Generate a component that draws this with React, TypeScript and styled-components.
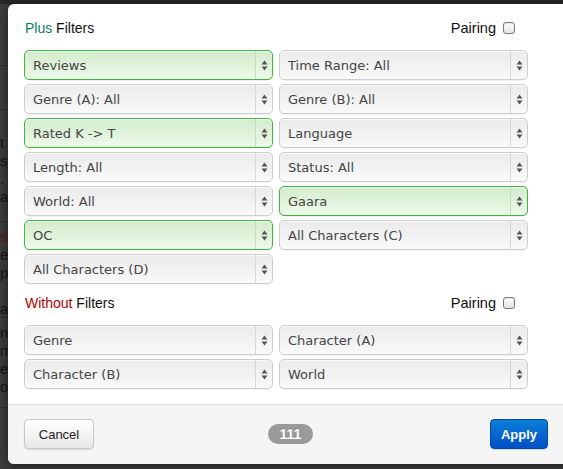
import React from "react";
import styled, { createGlobalStyle } from "styled-components";

const Global = createGlobalStyle`
  html, body { margin: 0; padding: 0; }
  body {
    width: 563px; height: 469px; overflow: hidden;
    background: #2c2c2c;
    font-family: "Liberation Sans", Arial, sans-serif;
  }
`;

const Page = styled.div`
  position: relative;
  width: 563px;
  height: 469px;
  overflow: hidden;
  background: #3b3b3b;
`;

const BackList = styled.div`
  display: flex;
  flex-direction: column;
  font-family: "Liberation Sans", Arial, sans-serif;
  font-size: 15px;
  color: #141414;
  line-height: 18px;
`;

const BackRow = styled.div<{ $h: number }>`
  height: ${(p) => p.$h}px;
  border-bottom: 1px solid #2e2e2e;
  padding-top: 6px;
  box-sizing: border-box;
  white-space: nowrap;
`;

const BackTop = styled.div`
  height: 4px;
  background: #262626;
`;

const Red = styled.span`
  color: #5a1a0c;
`;

const Modal = styled.div`
  position: absolute;
  left: 8px;
  top: 4px;
  width: 570px;
  height: 460px;
  background: #fff;
  border-radius: 6px;
  overflow: hidden;
  display: flex;
  flex-direction: column;
  box-shadow: 0 2px 8px rgba(0, 0, 0, 0.5);
`;

const Body = styled.div`
  padding: 14px 16px 15px 16px;
  width: 504px;
  display: flex;
  flex-direction: column;
`;

const SectionHead = styled.div<{ $mt?: number }>`
  display: flex;
  align-items: center;
  justify-content: space-between;
  height: 20px;
  margin-top: ${(p) => p.$mt ?? 0}px;
  margin-bottom: 12px;
  padding-left: 1px;
  padding-right: 13px;
  font-size: 14px;
  color: #111;
`;

const Title = styled.div``;

const Accent = styled.span<{ $c: string }>`
  color: ${(p) => p.$c};
`;

const PairLabel = styled.label`
  display: flex;
  align-items: center;
  gap: 7px;
  font-size: 14.5px;
  color: #111;
`;

const Check = styled.span`
  width: 10px;
  height: 10px;
  border: 1px solid #777;
  border-radius: 3px;
  background: linear-gradient(#fdfdfd, #e4e4e4);
  box-shadow: inset 0 1px 1px rgba(0, 0, 0, 0.08);
`;

const Grid = styled.div`
  display: grid;
  grid-template-columns: 249px 249px;
  column-gap: 6px;
  row-gap: 4px;
`;

const Select = styled.div<{ $on?: boolean }>`
  height: 30px;
  box-sizing: border-box;
  display: flex;
  align-items: stretch;
  border: 1px solid ${(p) => (p.$on ? "#3db83d" : "#cdcdcd")};
  border-radius: 5px;
  background: ${(p) =>
    p.$on
      ? "linear-gradient(#d4ebce, #e2f4dd 60%, #eefaeb)"
      : "linear-gradient(#ebebeb, #f3f3f3 60%, #fafafa)"};
  box-shadow: inset 0 1px 1px rgba(255, 255, 255, 0.8),
    0 1px 1px rgba(0, 0, 0, 0.05);
  font-family: "DejaVu Sans", Verdana, sans-serif;
  font-size: 13px;
  color: #444;
`;

const SelectText = styled.div`
  flex: 1;
  display: flex;
  align-items: center;
  padding-left: 8px;
  white-space: nowrap;
  overflow: hidden;
`;

const Arrow = styled.div<{ $on?: boolean }>`
  width: 16px;
  border-left: 1px solid ${(p) => (p.$on ? "#c6dcc1" : "#d6d6d6")};
  display: flex;
  align-items: center;
  justify-content: center;
`;

const Footer = styled.div`
  border-top: 1px solid #dcdcdc;
  background: #f5f5f5;
  flex: 1;
  width: 524px;
  padding: 14px 16px 0 16px;
  box-sizing: content-box;
  display: flex;
  align-items: flex-start;
  justify-content: space-between;
`;

const Button = styled.button<{ $primary?: boolean }>`
  height: 30px;
  box-sizing: border-box;
  padding: 0 ${(p) => (p.$primary ? 7 : 11)}px;
  border-radius: 4px;
  font-family: "Liberation Sans", Arial, sans-serif;
  font-size: 13px;
  font-weight: ${(p) => (p.$primary ? 700 : 400)};
  color: ${(p) => (p.$primary ? "#fff" : "#222")};
  border: 1px solid ${(p) => (p.$primary ? "#0748a8" : "#c8c8c8")};
  background: ${(p) =>
    p.$primary
      ? "linear-gradient(#0a7fd6, #0350c8)"
      : "linear-gradient(#ffffff, #e8e8e8)"};
  box-shadow: 0 1px 1px rgba(0, 0, 0, 0.12);
  width: ${(p) => (p.$primary ? 58 : 70)}px;
`;

const Badge = styled.div`
  margin-top: 5px;
  margin-left: -3px;
  height: 20px;
  width: 45px;
  border-radius: 10px;
  background: #9a9a9a;
  color: #fff;
  font-weight: 700;
  font-size: 14px;
  display: flex;
  align-items: center;
  justify-content: center;
  text-shadow: 0 -1px 0 rgba(0, 0, 0, 0.2);
`;

const Arrows = () => (
  <svg width="7" height="11" viewBox="0 0 7 11">
    <path d="M3.5 0.5 L6.5 4.5 L0.5 4.5 Z" fill="#555" />
    <path d="M3.5 10.5 L6.5 6.5 L0.5 6.5 Z" fill="#555" />
  </svg>
);

type F = { label: string; on?: boolean };

const plus: F[] = [
  { label: "Reviews", on: true },
  { label: "Time Range: All" },
  { label: "Genre (A): All" },
  { label: "Genre (B): All" },
  { label: "Rated K -> T", on: true },
  { label: "Language" },
  { label: "Length: All" },
  { label: "Status: All" },
  { label: "World: All" },
  { label: "Gaara", on: true },
  { label: "OC", on: true },
  { label: "All Characters (C)" },
  { label: "All Characters (D)" },
];

const without: F[] = [
  { label: "Genre" },
  { label: "Character (A)" },
  { label: "Character (B)" },
  { label: "World" },
];

const FilterSelect = ({ f }: { f: F }) => (
  <Select $on={f.on}>
    <SelectText>{f.label}</SelectText>
    <Arrow $on={f.on}>
      <Arrows />
    </Arrow>
  </Select>
);

export default function App() {
  return (
    <Page>
      <Global />
      <BackTop />
      <BackList>
        <BackRow $h={62}>&nbsp;</BackRow>
        <BackRow $h={44}>&nbsp;</BackRow>
        <BackRow $h={112}>
          <div>&nbsp;</div>
          <div>t</div>
          <div>s</div>
          <div>.</div>
          <div>a</div>
        </BackRow>
        <BackRow $h={96}>
          <div>
            <Red>s</Red>
          </div>
          <div>e</div>
          <div>p</div>
          <div>&nbsp;</div>
          <div>a</div>
        </BackRow>
        <BackRow $h={90}>
          <div>ny</div>
          <div>m</div>
          <div>e</div>
          <div>or</div>
        </BackRow>
      </BackList>
      <Modal>
        <Body>
          <SectionHead>
            <Title>
              <Accent $c="#0d7a5f">Plus</Accent> Filters
            </Title>
            <PairLabel>
              Pairing <Check />
            </PairLabel>
          </SectionHead>
          <Grid>
            {plus.map((f) => (
              <FilterSelect key={f.label} f={f} />
            ))}
          </Grid>
          <SectionHead $mt={9}>
            <Title>
              <Accent $c="#b00000">Without</Accent> Filters
            </Title>
            <PairLabel>
              Pairing <Check />
            </PairLabel>
          </SectionHead>
          <Grid>
            {without.map((f) => (
              <FilterSelect key={f.label} f={f} />
            ))}
          </Grid>
        </Body>
        <Footer>
          <Button>Cancel</Button>
          <Badge>111</Badge>
          <Button $primary>Apply</Button>
        </Footer>
      </Modal>
    </Page>
  );
}
